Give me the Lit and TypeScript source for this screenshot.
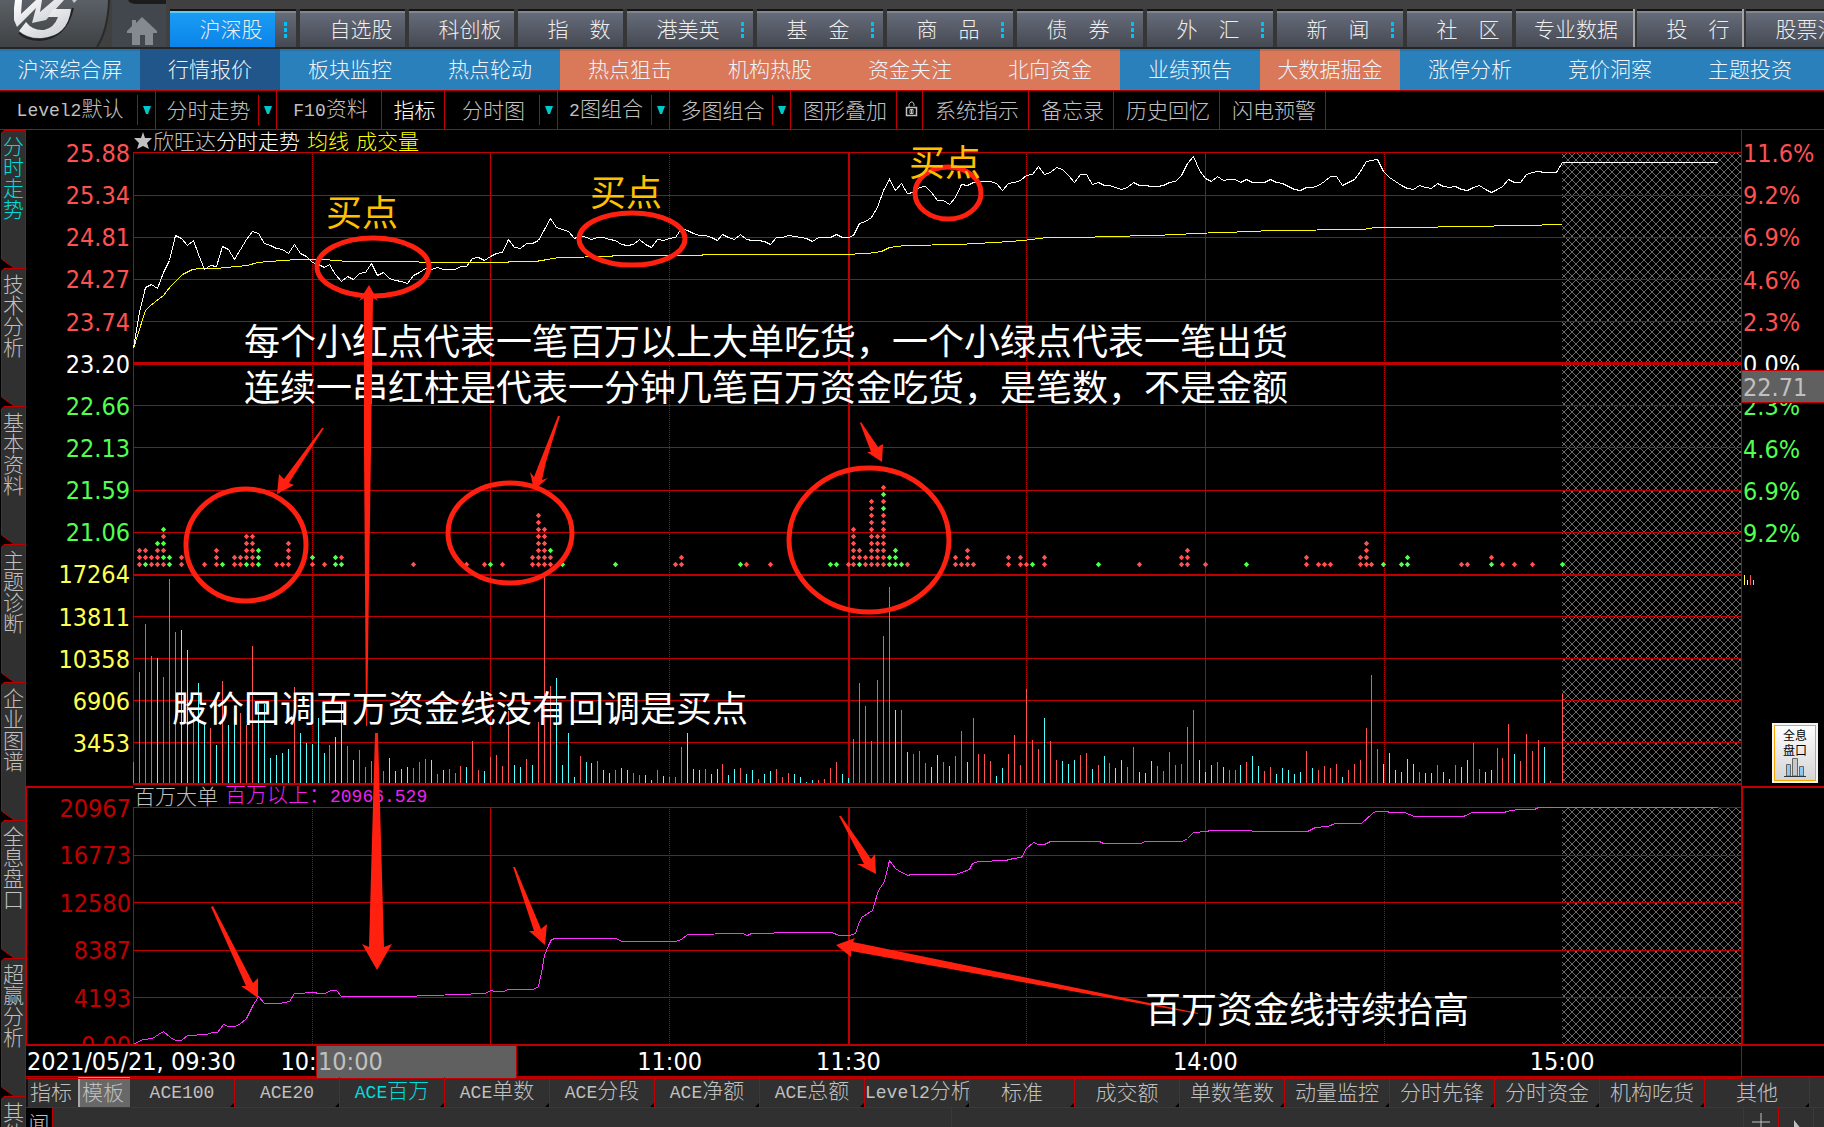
import { LitElement, html, svg, css } from "lit";
import { customElement, state } from "lit/decorators.js";
import { classMap } from "lit/directives/class-map.js";

const RED = "#c00000";
const UP = "#ff5050";
const DOWN = "#50ffff";
const BUY = "#50ff50";
const MARK = "#ff2010";

/** Chart canvas: x of the first minute, of the last one, and of the right edge. */
const X0 = 133;
const X1 = 1562;
const XR = 1741;
const minuteX = (i: number) => X0 + (i * (X1 - X0)) / 240;

const price = [
  348, 312, 287, 284, 288, 272, 260, 235, 238, 245, 240, 254, 269, 265, 266, 246, 249, 259, 249, 239,
  231, 233, 243, 245, 248, 249, 253, 244, 253, 256, 262, 264, 267, 264, 274, 281, 276, 279, 273, 272,
  263, 275, 272, 278, 280, 281, 283, 275, 272, 268, 269, 267, 269, 269, 269, 266, 266, 258, 257, 260,
  256, 253, 252, 239, 247, 248, 243, 243, 240, 229, 218, 227, 229, 231, 238, 235, 237, 239, 237, 237,
  239, 240, 244, 245, 244, 239, 244, 247, 239, 240, 238, 237, 228, 230, 233, 235, 235, 237, 240, 234,
  237, 239, 234, 239, 240, 240, 241, 244, 237, 237, 235, 236, 237, 238, 241, 237, 237, 237, 234, 237,
  237, 235, 223, 221, 217, 207, 190, 179, 190, 183, 193, 192, 187, 186, 192, 200, 200, 204, 197, 184,
  185, 182, 181, 181, 181, 183, 190, 183, 182, 180, 175, 174, 166, 174, 172, 167, 169, 175, 182, 174,
  174, 184, 182, 185, 185, 187, 189, 187, 182, 185, 185, 186, 186, 185, 182, 181, 175, 163, 156, 170,
  178, 181, 176, 180, 179, 179, 182, 179, 182, 182, 182, 179, 182, 183, 186, 189, 190, 187, 187, 185,
  181, 176, 176, 185, 182, 179, 171, 161, 160, 159, 171, 177, 181, 185, 188, 189, 185, 187, 188, 183,
  186, 187, 186, 189, 190, 187, 185, 189, 192, 189, 186, 179, 182, 182, 174, 172, 171, 172, 172, 172,
  162,
];

const average =
  "133,348 137,335 145,310 150,305 163,295 170,286 182,274 192,269 200,268 217,268 225,267 247,265 257,262 268,261 297,259 325,259 333,260 350,261 417,261 420,262 505,262 511,261 535,261 559,257 610,256 614,255 701,255 703,254 843,254 867,253 881,251 889,247 905,245 958,244 994,242 1023,240 1047,237 1077,237 1182,234 1190,233 1225,232 1272,230 1362,229 1375,227 1410,227 1522,225 1562,224";

const fund =
  "133,1044 138,1041 143,1039 152,1038 158,1034 163,1031 170,1037 175,1040 181,1040 187,1035 206,1034 212,1032 217,1032 223,1024 228,1026 234,1026 239,1024 246,1018 252,1006 258,996 264,1003 279,1003 289,1001 294,993 315,992 317,993 325,993 330,990 336,990 341,996 414,996 419,995 470,994 471,993 485,993 490,990 495,991 503,991 508,989 533,989 538,986 541,972 544,955 548,945 551,939 555,938 616,938 621,941 675,941 681,939 687,934 742,933 747,935 751,933 773,933 774,932 831,932 839,935 849,935 855,933 858,924 861,917 872,910 874,903 878,890 884,881 889,860 895,868 901,872 908,875 910,874 955,874 961,872 969,869 972,863 978,861 1005,860 1013,858 1021,857 1026,848 1033,842 1038,844 1044,844 1050,841 1099,841 1103,843 1141,843 1144,841 1182,841 1187,838 1193,832 1207,831 1209,830 1251,830 1252,831 1307,831 1315,827 1327,826 1335,823 1361,823 1372,813 1375,811 1387,811 1389,812 1404,812 1414,816 1463,816 1472,812 1504,812 1506,811 1518,809 1534,809 1538,807 1717,807";

/** Top of each minute's volume bar; a negative entry is a falling minute. */
const volume = [
  762, 672, 624, 656, -658, 677, 579, 632, -630, -650, 712, -683, -722, 728, -745, 681, -725, -717, 713, 725,
  646, -703, -704, -758, -755, -753, -749, 687, -733, -743, -744, -718, -753, 745, -737, -703, 746, -760, 750, 767,
  761, 765, 771, -758, -771, -769, -767, 768, 762, 759, -760, 774, -770, 769, 773, 766, -767, 741, 770, -771,
  757, 755, 766, 711, -765, -767, 759, -765, 722, 576, 686, -678, -765, -733, -777, 756, -762, -763, 761, -770,
  -773, 770, -768, -770, 773, 775, -775, -780, 770, -776, 777, 777, 747, -733, -769, -770, 769, -774, -769, 764,
  -775, -769, 768, -774, -770, 779, -774, -771, 769, 777, 773, -774, -777, -782, -780, 780, 779, 768, 762, -774,
  -778, 739, 683, 706, 741, 680, 636, 587, -710, 710, -752, 754, 751, 763, -767, -755, 762, -766, 756, 731,
  -762, 718, 754, 754, 761, -776, -768, 754, 735, 765, 689, 740, 749, -718, 741, 760, -761, -764, -760, 755,
  753, -769, 765, -756, 763, -768, -760, 767, 747, -772, -773, -761, 766, 771, 752, 765, 764, 727, 710, -760,
  -772, -765, 762, -767, 770, 770, -765, 762, -756, -766, 771, 767, -774, -768, -770, -774, -772, 751, -768, 770,
  766, 768, 764, -777, 770, 764, 760, 728, 675, 749, -764, -753, -770, -772, -759, -764, 772, -773, -773, 765,
  -772, -779, 765, -767, -760, 743, 769, -772, -770, 748, 758, 724, -754, 761, 734, 751, 740, -747, 781, 783,
  694,
];

/** Large orders by minute, lowest first: r is a purchase, g a sale. */
const orders: Record<number, string> = {
  1: "rrr", 2: "grr", 3: "rr", 4: "rrrg", 5: "rgrgrg", 6: "gg", 8: "rr", 12: "r", 14: "rrr", 15: "g",
  17: "rr", 18: "rr", 19: "grrrr", 20: "rrrrr", 21: "ggg", 24: "r", 25: "r", 26: "rrrr", 30: "rg", 32: "r",
  34: "gg", 35: "gr", 47: "r", 56: "r", 59: "r", 60: "g", 62: "r", 67: "rr", 68: "rrrrrrrr", 69: "rrrrrr",
  70: "rrg", 72: "g", 81: "g", 91: "r", 92: "rr", 102: "g", 103: "r", 107: "r", 117: "g", 118: "g", 120: "r",
  121: "rrrrrr", 122: "grr", 123: "rr", 124: "rrrrrrrrrr", 125: "rrrrr", 126: "rrrrrrrrgrgr", 127: "gg",
  128: "ggg", 129: "g", 130: "r", 138: "rr", 139: "r", 140: "rrr", 141: "r", 147: "rr", 149: "rr", 150: "r",
  151: "g", 153: "rr", 162: "g", 169: "r", 176: "rr", 177: "rrr", 180: "r", 187: "g", 197: "rr", 199: "r",
  200: "r", 201: "r", 206: "rr", 207: "rrrr", 208: "r", 210: "g", 213: "g", 214: "gg", 223: "r", 224: "r",
  228: "gr", 230: "r", 232: "r", 235: "r", 240: "g",
};

const mainTabs = [
  { t: "沪深股", more: true, on: true },
  { t: "自选股" },
  { t: "科创板" },
  { t: "指\u3000数" },
  { t: "港美英", more: true },
  { t: "基\u3000金", more: true },
  { t: "商\u3000品", more: true },
  { t: "债\u3000券", more: true },
  { t: "外\u3000汇", more: true },
  { t: "新\u3000闻", more: true },
  { t: "社\u3000区" },
  { t: "专业数据", wide: true, edge: true },
  { t: "投\u3000行", edge: true },
  { t: "股票池" },
] as { t: string; more?: boolean; on?: boolean; wide?: boolean; edge?: boolean }[];

const subTabs: [string, string][] = [
  ["沪深综合屏", ""], ["行情报价", "on"], ["板块监控", ""], ["热点轮动", ""],
  ["热点狙击", "hot"], ["机构热股", "hot"], ["资金关注", "hot"], ["北向资金", "hot"],
  ["业绩预告", ""], ["大数据掘金", "hot"], ["涨停分析", ""], ["竞价洞察", ""], ["主题投资", ""],
];

const tools: { t: string; w: number; drop?: boolean; on?: boolean }[] = [
  { t: "Level2默认", w: 137, drop: true },
  { t: "分时走势", w: 102, drop: true },
  { t: "F10资料", w: 105 },
  { t: "指标", w: 63, on: true },
  { t: "分时图", w: 94, drop: true },
  { t: "2图组合", w: 93, drop: true },
  { t: "多图组合", w: 102, drop: true },
  { t: "图形叠加", w: 106 },
  { t: "lock", w: 26 },
  { t: "系统指示", w: 106 },
  { t: "备忘录", w: 85 },
  { t: "历史回忆", w: 106 },
  { t: "闪电预警", w: 106 },
];

const sideTabs = ["分时走势", "技术分析", "基本资料", "主题诊断", "企业图谱", "全息盘口", "超赢分析", "其他"];

const bottomTabs = [
  "ACE100", "ACE20", "ACE百万", "ACE单数", "ACE分段", "ACE净额", "ACE总额", "Level2分析",
  "标准", "成交额", "单数笔数", "动量监控", "分时先锋", "分时资金", "机构吃货", "其他",
];

const leftAxis: [string, string][] = [
  ["25.88", "up"], ["25.34", "up"], ["24.81", "up"], ["24.27", "up"], ["23.74", "up"], ["23.20", "flat"],
  ["22.66", "down"], ["22.13", "down"], ["21.59", "down"], ["21.06", "down"],
  ["17264", "vol"], ["13811", "vol"], ["10358", "vol"], ["6906", "vol"], ["3453", "vol"],
];

const rightAxis: [string, string][] = [
  ["11.6%", "up"], ["9.2%", "up"], ["6.9%", "up"], ["4.6%", "up"], ["2.3%", "up"], ["0.0%", "flat"],
  ["2.3%", "down"], ["4.6%", "down"], ["6.9%", "down"], ["9.2%", "down"],
];

const notes: { x: number; y: number; t: string; gold?: boolean }[] = [
  { x: 326, y: 212, t: "买点", gold: true },
  { x: 590, y: 192, t: "买点", gold: true },
  { x: 909, y: 162, t: "买点", gold: true },
  { x: 172, y: 708, t: "股价回调百万资金线没有回调是买点" },
  { x: 1145, y: 1009, t: "百万资金线持续抬高" },
];
const underNotes = [
  { x: 244, y: 341, t: "每个小红点代表一笔百万以上大单吃货，一个小绿点代表一笔出货" },
  { x: 244, y: 387, t: "连续一串红柱是代表一分钟几笔百万资金吃货，是笔数，不是金额" },
];

/** Half-width runs are set in the monospaced face, as in terminal fonts. */
const mixed = (t: string) =>
  t.split(/([\x21-\x7e]+)/).map((p) => (/^[\x21-\x7e]/.test(p) ? html`<span class="lat">${p}</span>` : p));

const verticals = (top: number, bottom: number) => svg`
  ${[490, 1205].map((x) => svg`<rect x=${x} y=${top} width="1" height=${bottom - top} fill=${RED}></rect>`)}
  <rect x="848" y=${top} width="2" height=${bottom - top} fill=${RED}></rect>
  ${[312, 669, 1026, 1384].map(
    (x) => svg`<line x1=${x + 0.5} x2=${x + 0.5} y1=${top} y2=${bottom} stroke=${RED} stroke-dasharray="1 1"></line>`
  )}`;

const hatch = (id: string, top: number, bottom: number) => svg`
  <defs>
    <pattern id=${id} width="8" height="8" patternUnits="userSpaceOnUse">
      <path d="M0 0L8 8M8 0L0 8" stroke="#6a6a6a" fill="none"></path>
    </pattern>
  </defs>
  <rect x=${X1} y=${top} width=${XR - X1} height=${bottom - top} fill="url(#${id})"></rect>`;

@customElement("app-root")
export class AppRoot extends LitElement {
  @state() private side = 0;
  @state() private indicator = 2;

  static styles = css`
    :host { display: block; }
    * { box-sizing: border-box; }
    button {
      font: inherit; color: inherit; background: none; border: 0; padding: 0; margin: 0;
      white-space: nowrap; cursor: pointer;
    }
    .app {
      display: grid; grid-template-rows: 49px 41px 40px minmax(0, 1fr);
      height: 100vh; min-height: 900px; overflow: hidden; background: #000; color: #c0c0c0;
      font: 300 21px/24px "Noto Sans CJK SC", sans-serif;
    }
    .lat { font-family: "Liberation Mono", monospace; font-size: 18px; font-weight: 400; }

    .top { display: flex; overflow: hidden; background: #404040; border-bottom: 2px solid #262626; }
    .brand { flex: none; width: 112px; }
    .brand svg, .home svg { display: block; }
    .home { flex: none; width: 54px; margin-right: 4px; }
    .tabs { display: flex; gap: 4px; padding-top: 9px; flex: none; background: linear-gradient(#404040 9px, #363636 9px); }
    .tab {
      display: flex; flex: none; border-top: 2px solid #141414; color: #eee;
      background: linear-gradient(#82878f 2px, #666b7a 2px, #454952);
    }
    .tab button { width: 105px; padding: 0 0 2px 17px; }
    .tab.wide button { width: 117px; padding-left: 3px; }
    .tab.on > button { background: linear-gradient(#5fcaf5 2px, #1a9cf2 2px, #0a84ea); }
    .tab.edge { box-shadow: 2px 0 0 #a4a4a4; }
    .dots { width: 21px; display: grid; place-content: center; gap: 2px; padding-top: 2px; }
    .dots i { width: 3px; height: 4px; background: #00c0f8; }

    .sub { display: flex; background: #2980ba; overflow: hidden; box-shadow: inset 0 2px 0 #2774a8; }
    .sub button { width: 140px; flex: none; color: #eef4fa; padding-bottom: 3px; }
    .sub .on { background: #205689; }
    .sub .hot { background: #d9795a; box-shadow: inset 0 2px 0 #bd6c52; }

    .tools { display: flex; border: solid #c00000; border-width: 1px 0; overflow: hidden; }
    .tool { display: flex; flex: none; border-right: 1px solid #c00000; }
    .tool > button:first-child { padding: 0 0 2px 3px; }
    .tool.on { color: #fff; }
    .tool .drop { width: 18px; border-left: 1px solid #c00000; margin: 4px 0; display: grid; place-items: center; }
    .tool svg { display: block; margin: auto; }

    .body { display: grid; grid-template-columns: 26px minmax(0, 1fr); min-height: 0; }
    .side { overflow: hidden; min-height: 0; }
    .side button {
      display: grid; position: relative; width: 26px; height: 138px; padding: 5px 2px 0 3px;
      align-content: start; line-height: 21px; white-space: normal; word-break: break-all;
    }
    .side svg { position: absolute; inset: 0; }
    .side span { position: relative; }
    .side .on { color: #00dcdc; }

    .work { display: grid; grid-template-rows: minmax(0, 1fr) 31px 31px 19px; min-height: 0; }
    .stack { position: relative; display: grid; grid-template-rows: minmax(0, 656fr) minmax(0, 260fr); min-height: 0; }
    .panel { display: grid; grid-template-columns: 107px minmax(0, 1fr) 83px; min-height: 0; }
    .mid { display: grid; min-height: 0; }
    .p1 .mid { grid-template-rows: 22px minmax(0, 1fr); }
    .p2 .mid { grid-template-rows: 21px minmax(0, 1fr); }
    .p2 { border-bottom: 2px solid #c00000; overflow: hidden; }
    .plot { display: block; width: 100%; height: 100%; min-height: 0; }
    .title { display: flex; align-items: center; white-space: nowrap; line-height: 20px; padding-bottom: 3px; }
    .title svg { margin: 0 1px; }
    .title b { font-weight: 300; color: #fff; }
    .title .y { color: #ff0; margin-left: 7px; }
    .p2 .title { padding-left: 1px; gap: 7px; }
    .title .m { color: #f020f0; }

    .axis {
      display: flex; flex-direction: column; justify-content: space-between;
      font: 25px/30px "DejaVu Sans Condensed", "Noto Sans", sans-serif; min-height: 0; white-space: nowrap;
    }
    .p1 .left { text-align: right; padding: 9px 3px 27px 0; }
    .p2 .left { text-align: right; padding: 6px 2px 0 0; color: #c00000; border: solid #c00000; border-width: 2px 0 0 1px; overflow: hidden; }
    .p2 .spread { display: flex; flex-direction: column; justify-content: space-between; flex: 1; margin-bottom: -17px; }
    .p1 .right { position: relative; border-left: 1px solid #c00000; padding: 9px 0 237px 1px; }
    .p2 .right { border: solid #c00000; border-width: 2px 0 0 2px; }
    .up { color: #ff5050; }
    .flat { color: #fff; }
    .down { color: #50ff50; }
    .vol { color: #ffff50; }
    .cursor {
      position: absolute; left: 0; right: 0; top: 240px; height: 33px; line-height: 33px; padding-left: 1px;
      background: #606060; border: solid #c00000; border-width: 1px 0; color: #c0c0c0;
    }
    .mini { position: absolute; left: 1px; top: 445px; }
    .holo {
      position: absolute; right: 6px; bottom: 3px; width: 46px; height: 60px;
      border: 2px solid #f4f4f4; outline: 1px solid #f5a800; outline-offset: -3px;
      background: linear-gradient(#fff, #d4d4d4); color: #000;
      font: 12px/15px "Noto Sans CJK SC", sans-serif; padding-top: 2px;
      display: grid; justify-items: center; align-content: start;
    }

    .over { position: absolute; inset: 0; pointer-events: none; }
    .over svg { position: absolute; width: 100%; height: 100%; }
    .note {
      position: absolute; margin-top: -25px; font: 400 36px/46px "Noto Sans CJK SC", sans-serif;
      color: #fff; white-space: nowrap;
    }
    .note.gold { color: #ffc000; }

    .timeline { display: grid; grid-template-columns: minmax(0, 1fr); background: linear-gradient(#c00000, #c00000) 0 100% / 100% 1px no-repeat; }
    .time {
      position: relative; border: solid #c00000; border-width: 0 1px 1px 0; color: #fff; margin-right: 82px;
      font: 25px/32px "DejaVu Sans Condensed", "Noto Sans", sans-serif; white-space: nowrap;
    }
    .time time { padding-left: 1px; }
    .time .tick { position: absolute; top: 0; transform: translateX(-50%); }
    .time .at {
      position: absolute; top: 0; bottom: 0; left: 290px; width: 201px; padding-left: 1px;
      background: #606060; border: solid #c00000; border-width: 0 1px; color: #c0c0c0;
    }

    .inds { display: flex; background: #303030; border-bottom: 1px solid #c00000; overflow: hidden; }
    .inds .mode { width: 52px; flex: none; border: solid #111; border-width: 2px 0 0 2px; padding: 0 4px 4px 0; }
    .inds .mode.pressed { background: #686868; border: solid #a8a8a8; border-width: 2px 0 0 2px; }
    .inds .ind { position: relative; width: 105px; flex: none; border-right: 1px solid #c00000; overflow: hidden; padding-bottom: 2px; }
    .inds .ind.on { color: #00dcdc; }
    .ind svg { position: absolute; bottom: 0; right: 0; }
    .status { display: grid; grid-template-columns: 27px 899px minmax(0, 1fr) 35px 35px 10px; background: #303030; overflow: hidden; }
    .status > * { border-right: 1px solid #c00000; overflow: hidden; }
    .status > :last-child { border: 0; }
    .news { background: #000; line-height: 28px; text-align: center; }
    .status svg { display: block; margin: 5px auto 0; }
  `;

  private brand() {
    return html`<div class="brand">
      <svg width="112" height="47" role="img" aria-label="logo">
        <defs>
          <linearGradient id="shell" x1="0" y1="0" x2="0" y2="1">
            <stop offset="0" stop-color="#5b6066"></stop><stop offset="1" stop-color="#3e4245"></stop>
          </linearGradient>
          <linearGradient id="metal" x1="0" y1="0" x2="1" y2="1">
            <stop offset="0" stop-color="#fff"></stop><stop offset="1" stop-color="#c4c8ce"></stop>
          </linearGradient>
        </defs>
        <path d="M0 0H109Q108 30 97 47H0Z" fill="url(#shell)"></path>
        <path d="M109 0Q108 30 97 47" fill="none" stroke="#2a2a2a" stroke-width="2"></path>
        <path d="M19 33Q27 40 40 40Q66 38 73 8" fill="none" stroke="#222" stroke-width="2"></path>
        <path d="M14 8L15 0H22L21 14L36 0H42L40 12L54 0H64L46 20L32 23L36 8L17 27L14 20Z" fill="url(#metal)"></path>
        <path d="M19 31L26 22Q33 31 44 30Q54 28 58 17H48L53 9H71Q68 36 42 38Q28 39 19 31Z" fill="url(#metal)"></path>
        <path d="M72 0H77L74 3Z" fill="#c4c8ce"></path>
      </svg>
    </div>`;
  }

  private home() {
    return html`<button class="home" aria-label="首页">
      <svg width="54" height="47">
        <rect width="54" height="47" fill="#42464d"></rect>
        <path d="M16 0H78Q76 4 70 4H24Q18 4 16 0Z" fill="#1c1c1c"></path>
        <path d="M30 17L45 31V33H41V45H33V35H28V45H20V33H15V31L20 26V20H24V23Z" fill="#858a90"></path>
      </svg>
    </button>`;
  }

  private tool(t: (typeof tools)[number]) {
    const lock = svg`<g fill="none" stroke="#c0c0c0"><path d="M2.500 7.500H12.500V15.500H2.500Z" stroke-width="1.500"></path>
      <path d="M5 7V4L7 2H8.500L10 4V6"></path><path d="M6 9.500H9V13.500H6ZM7.500 9V14"></path></g>`;
    return html`<div class=${classMap({ tool: true, on: !!t.on })}>
      <button style="width:${t.w - (t.drop ? 0 : 1)}px" aria-label=${t.t === "lock" ? "锁定" : t.t}>
        ${t.t === "lock" ? html`<svg width="15" height="18">${lock}</svg>` : mixed(t.t)}
      </button>
      ${t.drop
        ? html`<button class="drop" aria-label="展开">
            <svg width="8" height="9"><path d="M0 0H8L5 8H3Z" fill="#00c8c8"></path></svg>
          </button>`
        : ""}
    </div>`;
  }

  private mainPlot() {
    const rows = [152, 195, 237, 279, 321, 405, 447, 490, 532, 616, 658, 700, 742];
    return html`<svg class="plot" viewBox="133 152 1608 634" preserveAspectRatio="none" shape-rendering="crispEdges">
      ${hatch("h1", 153, 783)}
      ${verticals(152, 784)}
      ${rows.map((y) => svg`<rect x=${X0} y=${y} width=${XR - X0} height="1" fill=${RED}></rect>`)}
      <rect x="133" y="362" width="1608" height="3" fill=${RED}></rect>
      <rect x="133" y="574" width="1608" height="2" fill=${RED}></rect>
      <rect x="133" y="783" width="1608" height="2" fill=${RED}></rect>
      <rect x="133" y="152" width="1" height="632" fill=${RED}></rect>
      ${volume.map(
        (v, i) => svg`<rect x=${Math.round(minuteX(i))} y=${Math.abs(v)} width="1" height=${783 - Math.abs(v)} fill=${v < 0 ? DOWN : UP}></rect>`
      )}
      <g transform="translate(0.5 0.5)" fill="none">
        <polyline points=${average} stroke="#ffff00"></polyline>
        <polyline points=${price.map((y, i) => `${Math.round(minuteX(i))},${y}`).join(" ") + " 1717,162"} stroke="#fff"></polyline>
      </g>
      <g shape-rendering="auto">
        ${Object.entries(orders).map(([i, col]) =>
          [...col].map((c, k) => {
            const x = Math.round(minuteX(+i)) + 0.5;
            const y = 564.5 - 7 * k;
            return svg`<path d="M${x - 2.7} ${y}L${x} ${y - 2.7}L${x + 2.7} ${y}L${x} ${y + 2.7}Z" fill=${c === "g" ? BUY : UP}></path>`;
          })
        )}
      </g>
    </svg>`;
  }

  private fundPlot() {
    return html`<svg class="plot" viewBox="133 807 1608 237" preserveAspectRatio="none" shape-rendering="crispEdges">
      ${hatch("h2", 808, 1044)}
      ${verticals(807, 1044)}
      ${[807, 855, 902, 950, 997].map((y) => svg`<rect x=${X0} y=${y} width=${XR - X0} height="1" fill=${RED}></rect>`)}
      <rect x="133" y="807" width="1" height="237" fill=${RED}></rect>
      <polyline points=${fund} transform="translate(0.5 0.5)" fill="none" stroke="#ff30ff"></polyline>
    </svg>`;
  }

  private marks() {
    const rings = [
      [373, 267, 56, 29], [632, 239, 53, 26], [948, 193, 33, 26],
      [246, 545, 60, 56], [510, 533, 62, 50], [869, 540, 80, 72],
    ];
    const arrows = [
      "324,428 289,483 294,485 277,494 279,474 284,479 322,428",
      "560,416 546,462 542,480 548,478 534,490 530,472 534,477 541,459 558,416",
      "861,422 878,447 883,444 882,462 867,452 871,452 860,423",
      "369,285 378,301 373,298 371,450 367,726 366,726 364,450 364,298 359,301",
      "375,733 378,733 384,947 392,944 377,970 362,944 369,947",
      "213,906 253,983 258,978 258,998 241,986 246,986 211,907",
      "515,867 541,929 547,924 545,945 529,931 534,931 513,867",
      "841,816 871,859 875,854 876,874 857,864 864,864 839,816",
      "836,945 855,938 853,942 1198,1013 1198,1014 851,951 851,957",
    ];
    return html`<svg viewBox="26 130 1798 916" preserveAspectRatio="none">
      ${rings.map(([x, y, a, b]) => svg`<ellipse cx=${x} cy=${y} rx=${a} ry=${b} fill="none" stroke=${MARK} stroke-width="5"></ellipse>`)}
      ${arrows.map((p) => svg`<polygon points=${p} fill=${MARK}></polygon>`)}
    </svg>`;
  }

  private note(n: { x: number; y: number; t: string; gold?: boolean }) {
    const pos = `left:${((n.x - 26) / 1798) * 100}%;top:${((n.y - 130) / 916) * 100}%`;
    return html`<div class=${classMap({ note: true, gold: !!n.gold })} style=${pos}>${n.t}</div>`;
  }

  render() {
    return html`<div class="app">
      <header class="top">
        ${this.brand()}${this.home()}
        <nav class="tabs">
          ${mainTabs.map(
            (m) => html`<div class=${classMap({ tab: true, on: !!m.on, wide: !!m.wide, edge: !!m.edge })}>
              <button>${m.t}</button>${m.more ? html`<span class="dots"><i></i><i></i><i></i></span>` : ""}
            </div>`
          )}
        </nav>
      </header>
      <nav class="sub">${subTabs.map(([t, c]) => html`<button class=${c}>${t}</button>`)}</nav>
      <div class="tools">${tools.map((t) => this.tool(t))}</div>
      <div class="body">
        <nav class="side">
          ${sideTabs.map(
            (t, i) => html`<button class=${i === this.side ? "on" : ""} @click=${() => (this.side = i)}>
              <svg width="26" height="138">
                <path d="M1.500 3L4 0.500H25.500V138H14L1.500 129Z" fill="#303030"></path>
                <path d="M25.500 0V138M14 138L1.500 129V3L4 0.500H25" fill="none" stroke=${RED}></path>
              </svg>
              <span>${t}</span>
            </button>`
          )}
        </nav>
        <main class="work">
          <div class="stack">
            <section class="panel p1">
              <div class="axis left">${leftAxis.map(([t, c]) => html`<span class=${c}>${t}</span>`)}</div>
              <div class="mid">
                <div class="title">
                  <svg width="18" height="18"><path d="M9 1L11 7H18L13 12L15 18L9 15L3 18L5 12L0 7H7Z" fill="#c0c0c0"></path></svg>
                  <span>欣旺达</span><b>分时走势</b><span class="y">均线</span><span class="y">成交量</span>
                </div>
                ${this.mainPlot()}
              </div>
              <div class="axis right">
                ${rightAxis.map(([t, c]) => html`<span class=${c}>${t}</span>`)}
                <span class="cursor">22.71</span>
                <svg class="mini" width="12" height="10" shape-rendering="crispEdges">
                  <path d="M1.500 0V10M4.500 5V10" stroke="#ffff50"></path>
                  <path d="M7.500 0V10" stroke=${UP}></path><path d="M10.500 5V10" stroke=${DOWN}></path>
                </svg>
                <button class="holo">
                  <span>全息</span><span>盘口</span>
                  <svg width="22" height="21">
                    <g stroke="#666">
                      <path d="M2.500 7.500H6.500V19H2.500Z" fill="#8cc8f4"></path>
                      <path d="M8.500 1.500H13.500V19H8.500Z" fill="#c8c8c8"></path>
                      <path d="M15.500 9.500H19.500V19H15.500Z" fill="#8cc8f4"></path>
                      <path d="M0 19.500H22" stroke="#333"></path>
                    </g>
                  </svg>
                </button>
              </div>
            </section>
            <section class="panel p2">
              <div class="axis left"><div class="spread">
                ${["20967", "16773", "12580", "8387", "4193", "0.00"].map((t) => html`<span>${t}</span>`)}
              </div></div>
              <div class="mid">
                <div class="title"><span>百万大单</span><span class="m">百万以上：${mixed("20966.529")}</span></div>
                ${this.fundPlot()}
              </div>
              <div class="right"></div>
            </section>
            <div class="over">
              ${underNotes.map((n) => this.note(n))}${this.marks()}${notes.map((n) => this.note(n))}
            </div>
          </div>
          <div class="timeline">
            <div class="time">
              <time>2021/05/21, 09:30</time>
              ${([[313, "10:00"], [670, "11:00"], [849, "11:30"], [1206, "14:00"], [1563, "15:00"]] as [number, string][]).map(
                ([x, t]) => html`<span class="tick" style="left:${((x - 26) / 1716) * 100}%">${t}</span>`
              )}
              <span class="at">10:00</span>
            </div>
          </div>
          <div class="inds">
            <button class="mode">指标</button><button class="mode pressed">模板</button>
            ${bottomTabs.map(
              (t, i) => html`<button class=${classMap({ ind: true, on: i === this.indicator })} @click=${() => (this.indicator = i)}>
                ${mixed(t)}<svg width="4" height="4"><path d="M4 0L0 4H4Z" fill="#000"></path></svg>
              </button>`
            )}
          </div>
          <footer class="status">
            <span class="news">闻</span><span></span><span></span>
            <button aria-label="放大"><svg width="20" height="18"><path d="M10 0V18M1 9H19" stroke="#c0c0c0"></path></svg></button>
            <button aria-label="指针"><svg width="20" height="18"><path d="M8 7V18L12 16L16 17Z" fill="#c0c0c0"></path></svg></button>
            <span></span>
          </footer>
        </main>
      </div>
    </div>`;
  }
}
